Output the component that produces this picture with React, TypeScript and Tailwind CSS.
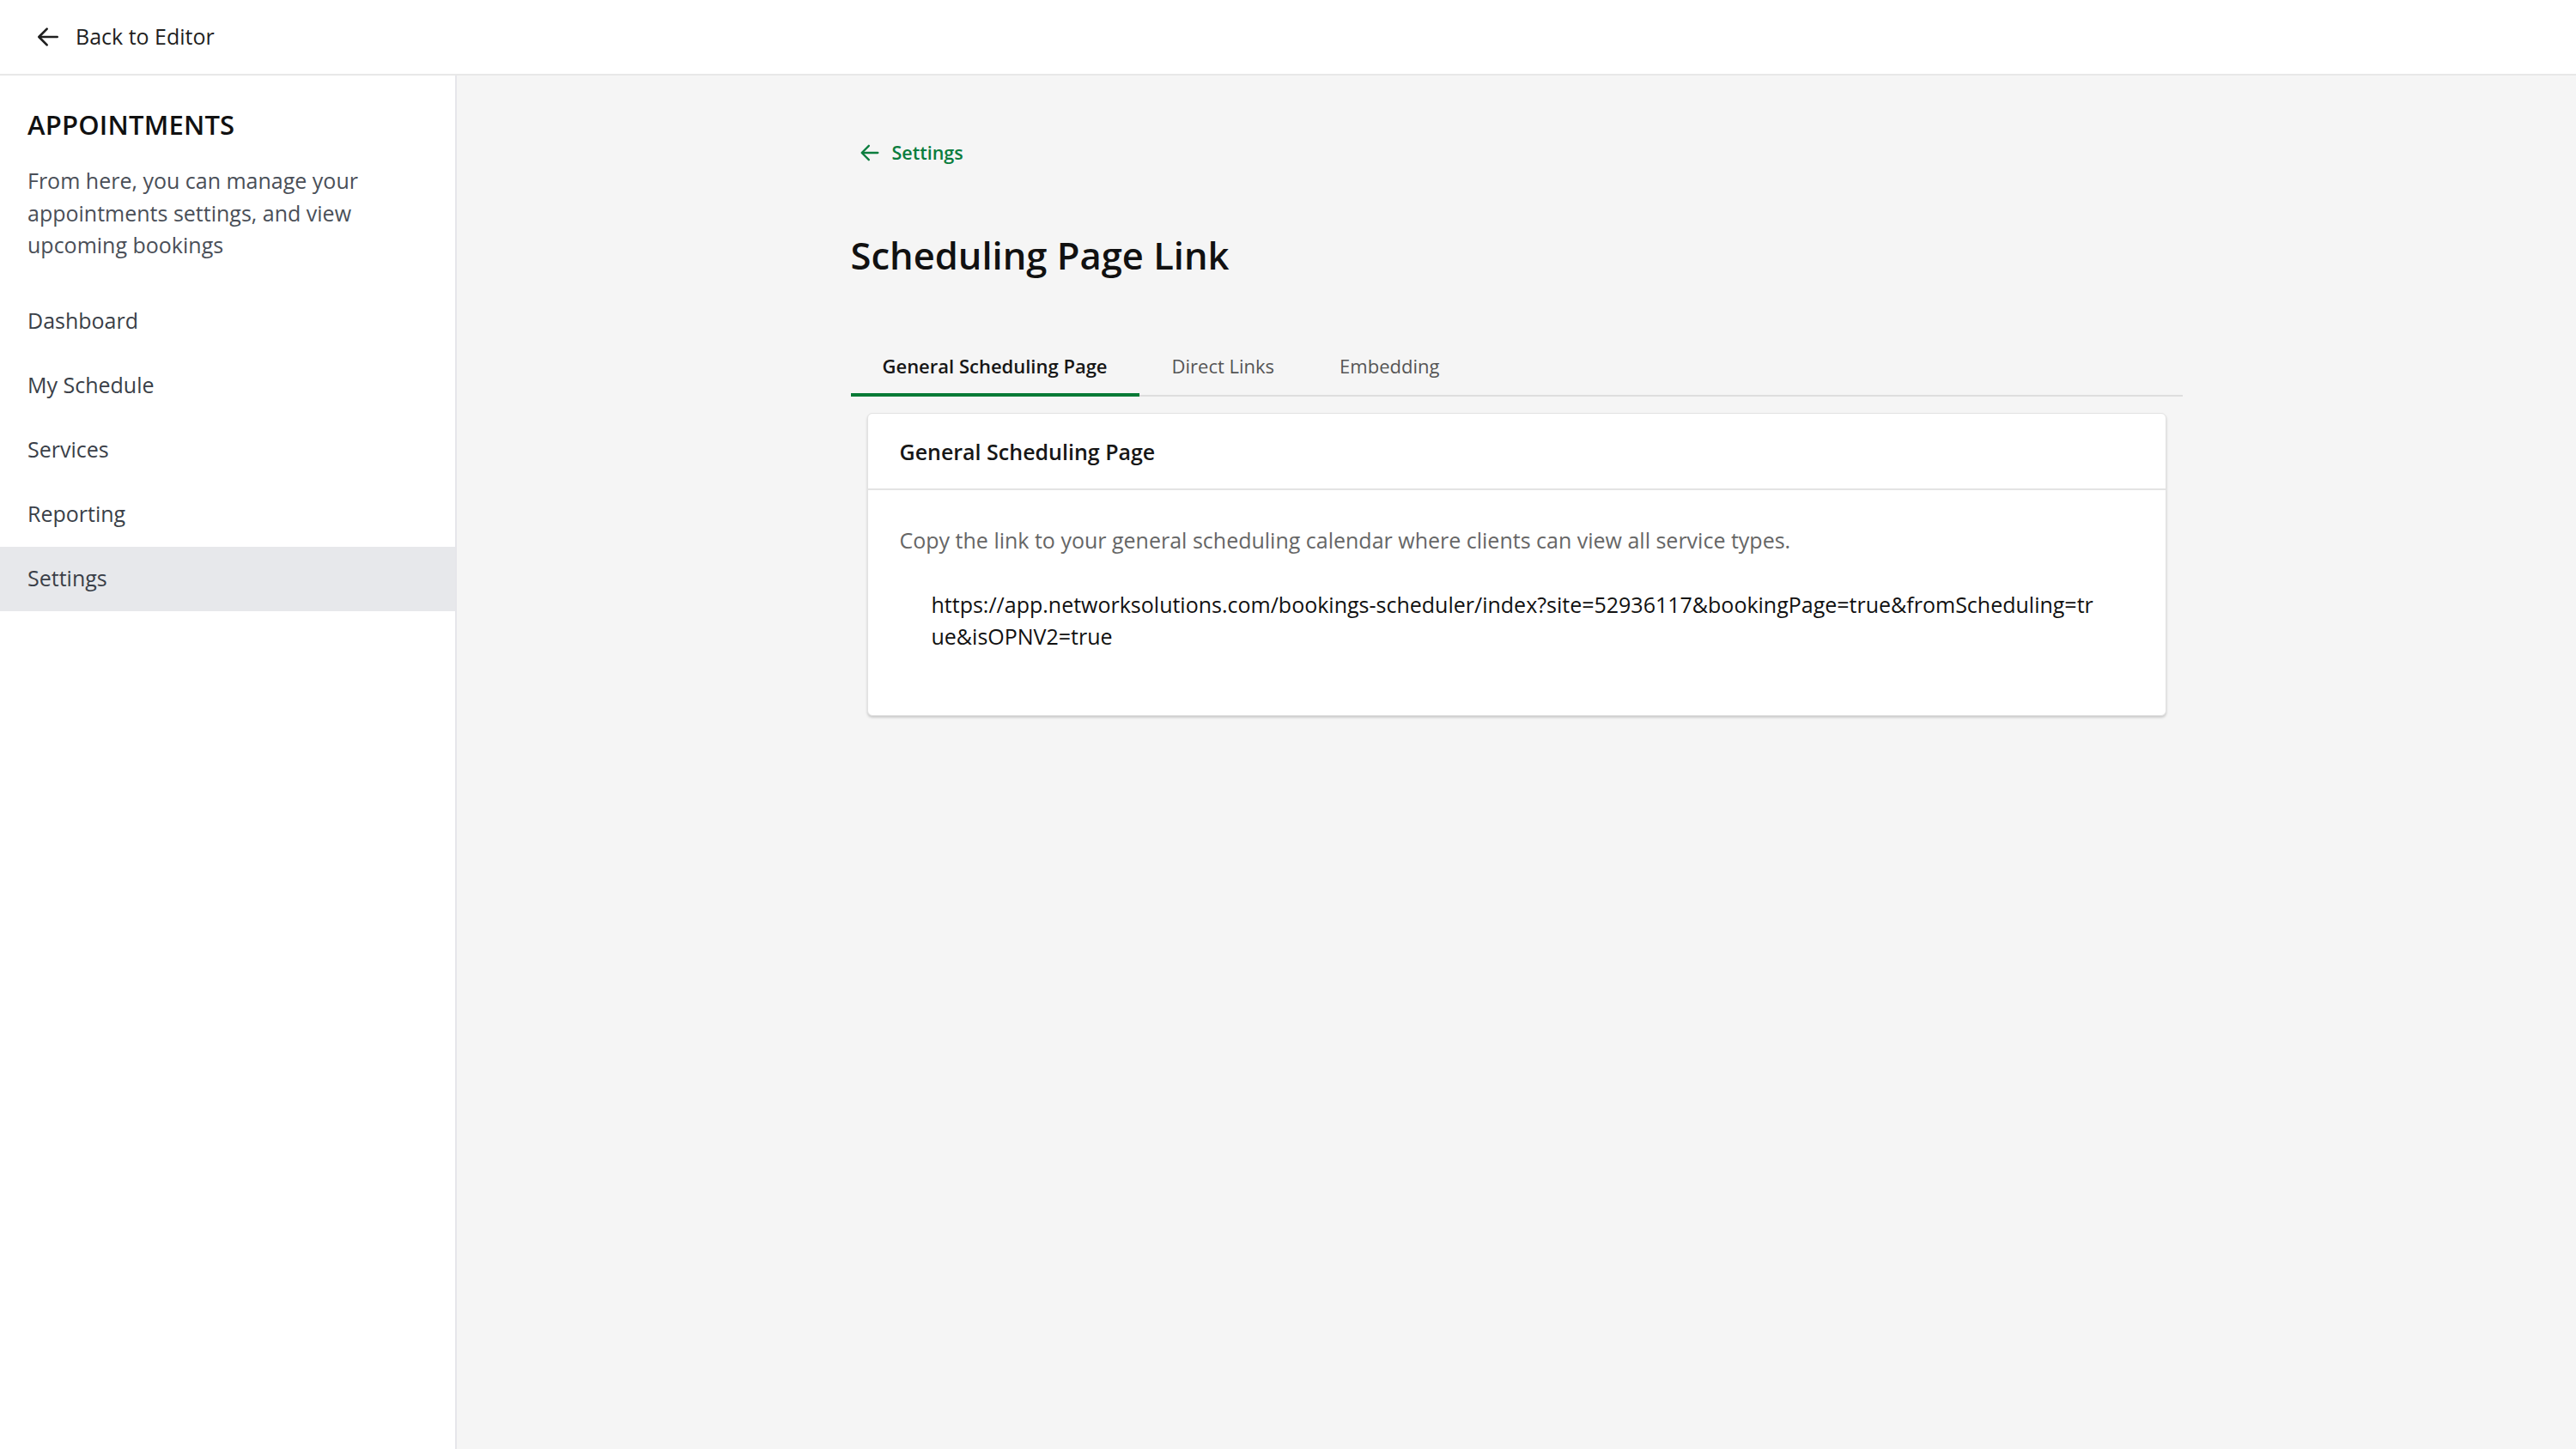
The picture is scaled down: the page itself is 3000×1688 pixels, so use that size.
import { useState } from "react";

const navItems = ["Dashboard", "My Schedule", "Services", "Reporting", "Settings"];
const tabs = ["General Scheduling Page", "Direct Links", "Embedding"];

const ArrowBack = ({ className }: { className?: string }) => (
  <svg viewBox="0 0 24 24" fill="none" stroke="currentColor" strokeWidth={2} strokeLinecap="round" strokeLinejoin="round" className={className}>
    <path d="M20 12H4.5" />
    <path d="M11 5l-7 7 7 7" />
  </svg>
);

const App = () => {
  const [activeNav, setActiveNav] = useState("Settings");
  const [activeTab, setActiveTab] = useState("General Scheduling Page");

  return (
    <div className="flex min-h-screen w-full flex-col bg-white font-['Open_Sans',sans-serif]">
      {/* Top bar */}
      <div className="flex h-[88px] items-center border-b-2 border-[#e8e8e8] bg-white pl-[40px]">
        <button className="flex items-center gap-[16px] text-[25px] text-[#1f1f1f]">
          <ArrowBack className="h-[32px] w-[32px]" />
          <span>Back to Editor</span>
        </button>
      </div>

      <div className="flex flex-1">
        {/* Sidebar */}
        <aside className="w-[532px] shrink-0 border-r-2 border-[#e6e6ea] bg-white pt-[37px]">
          <div className="px-[32px]">
            <h2 className="text-[31px] font-semibold leading-[40px] tracking-[0.2px] text-[#111]">APPOINTMENTS</h2>
            <p className="mt-[27px] w-[420px] text-[25px] leading-[37.5px] text-[#4a4f58]">
              From here, you can manage your appointments settings, and view upcoming bookings
            </p>
          </div>
          <nav className="mt-[32px] flex flex-col">
            {navItems.map((item) => (
              <button
                key={item}
                onClick={() => setActiveNav(item)}
                className={
                  item === activeNav
                    ? "flex h-[75px] items-center bg-[#e7e8eb] px-[32px] text-left text-[25px] text-[#3a3f48]"
                    : "flex h-[75px] items-center px-[32px] text-left text-[25px] text-[#3a3f48]"
                }
              >
                {item}
              </button>
            ))}
          </nav>
        </aside>

        {/* Main */}
        <main className="flex-1 bg-[#f5f5f5] pb-[60px]">
          <div className="mx-auto w-full max-w-[1551px] pt-[74px]">
            <button className="ml-[8px] flex items-center gap-[12px] text-[21.5px] font-semibold leading-[32px] text-[#0b7d3e]">
              <ArrowBack className="h-[28px] w-[28px]" />
              <span>Settings</span>
            </button>

            <h1 className="mt-[74px] text-[43.5px] font-semibold leading-[60px] text-[#111]">Scheduling Page Link</h1>

            <div className="mt-[63px] flex border-b-2 border-[#dedede]">
              {tabs.map((tab) => (
                <button
                  key={tab}
                  onClick={() => setActiveTab(tab)}
                  className={
                    tab === activeTab
                      ? "-mb-[2px] border-b-4 border-[#077a36] px-[37px] pt-[19px] pb-[16px] text-[22px] font-semibold leading-[32px] text-[#161616]"
                      : "-mb-[2px] border-b-4 border-transparent px-[38px] pt-[19px] pb-[16px] text-[22px] leading-[32px] text-[#555]"
                  }
                >
                  {tab}
                </button>
              ))}
            </div>

            <div className="mx-[19px] mt-[19px] rounded-[6px] border border-[#e2e2e2] bg-white shadow-[0_2px_3px_rgba(0,0,0,0.18)]">
              <div className="flex h-[89px] items-center border-b-2 border-[#e3e3e3] px-[37px]">
                <h3 className="mt-[2px] text-[25px] font-semibold text-[#161616]">General Scheduling Page</h3>
              </div>
              <div className="px-[37px] pt-[40px] pb-[73px]">
                <p className="text-[25px] leading-[37px] text-[#666]">
                  Copy the link to your general scheduling calendar where clients can view all service types.
                </p>
                <div className="mx-[37px] mt-[38px] break-all text-[25px] leading-[37px] text-[#111]">
                  https://app.networksolutions.com/bookings-scheduler/index?site=52936117&amp;bookingPage=true&amp;fromScheduling=true&amp;isOPNV2=true
                </div>
              </div>
            </div>
          </div>
        </main>
      </div>
    </div>
  );
};

export default App;
